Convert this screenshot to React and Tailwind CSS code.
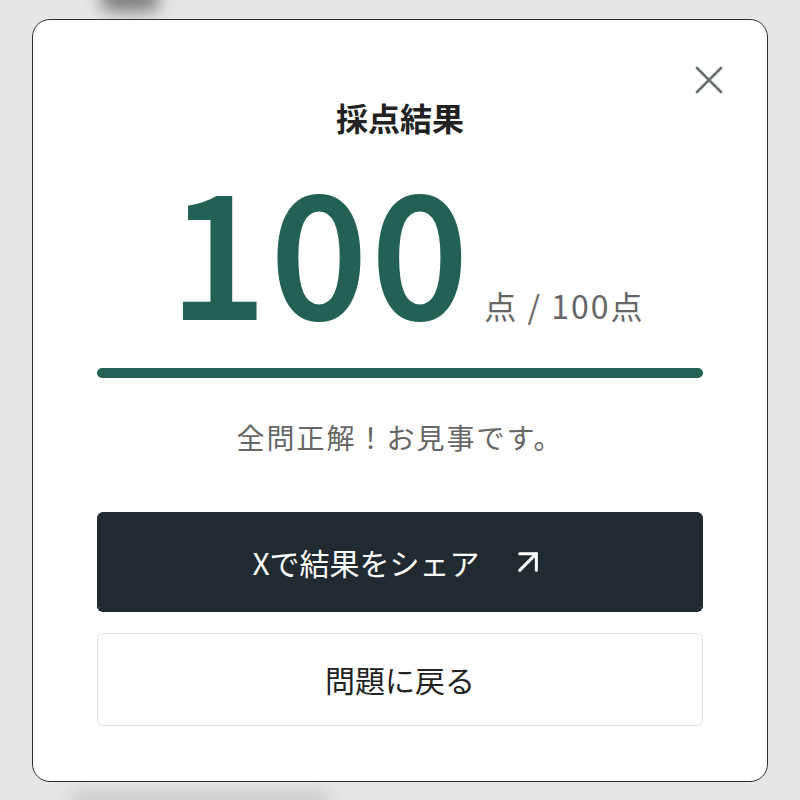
import React from 'react';
import { X, ArrowUpRight } from 'lucide-react';

const font = { fontFamily: '"Noto Sans CJK JP", "Noto Sans", sans-serif' };

const ResultModal = () => {
  return (
    <div className="relative bg-white border-[1.5px] border-[#2b2f31] rounded-[18px] h-[763px] px-16">
      <button className="absolute right-[34px] top-[36px] text-[#6b7370]">
        <X size={48} strokeWidth={1.4} />
      </button>

      <h2 className="pt-[77px] text-center text-[32px] leading-[40px] font-bold text-[#222]">
        採点結果
      </h2>

      <div className="flex items-baseline justify-center mt-[23px] ml-[14px]">
        <span className="text-[170px] leading-none font-medium tracking-[4px] text-[#236155] [-webkit-text-stroke:2px_#236155]">
          100
        </span>
        <span className="text-[32px] leading-none text-[#666] ml-[12px] tracking-[2px] whitespace-nowrap">
          点 / 100点
        </span>
      </div>

      <div className="mt-[38px] h-[10px] rounded-full bg-[#256356]" />

      <p className="mt-[41px] text-center text-[28px] leading-[36px] tracking-[2px] text-[#666]">
        全問正解！お見事です。
      </p>

      <button className="mt-[57px] w-full h-[100px] rounded-[6px] bg-[#212a30] text-white text-[30px] flex items-center justify-center">
        <span>Xで結果をシェア</span>
        <ArrowUpRight size={40} strokeWidth={1.8} className="ml-[28px]" />
      </button>

      <button className="mt-[21px] w-full h-[93px] rounded-[6px] border-[1.5px] border-[#e0e0e0] bg-white text-[#222] text-[30px]">
        問題に戻る
      </button>
    </div>
  );
};

export default function App() {
  return (
    <div className="relative min-h-[800px] bg-[#e6e6e6] overflow-hidden pt-[19px] px-8" style={font}>
      <div className="absolute left-[100px] top-[-14px] w-[60px] h-[26px] rounded-full bg-[#555] blur-[8px] opacity-70" />
      <div className="absolute left-[70px] top-[790px] w-[260px] h-[20px] rounded-full bg-[#ccc] blur-[8px]" />
      <ResultModal />
    </div>
  );
}
